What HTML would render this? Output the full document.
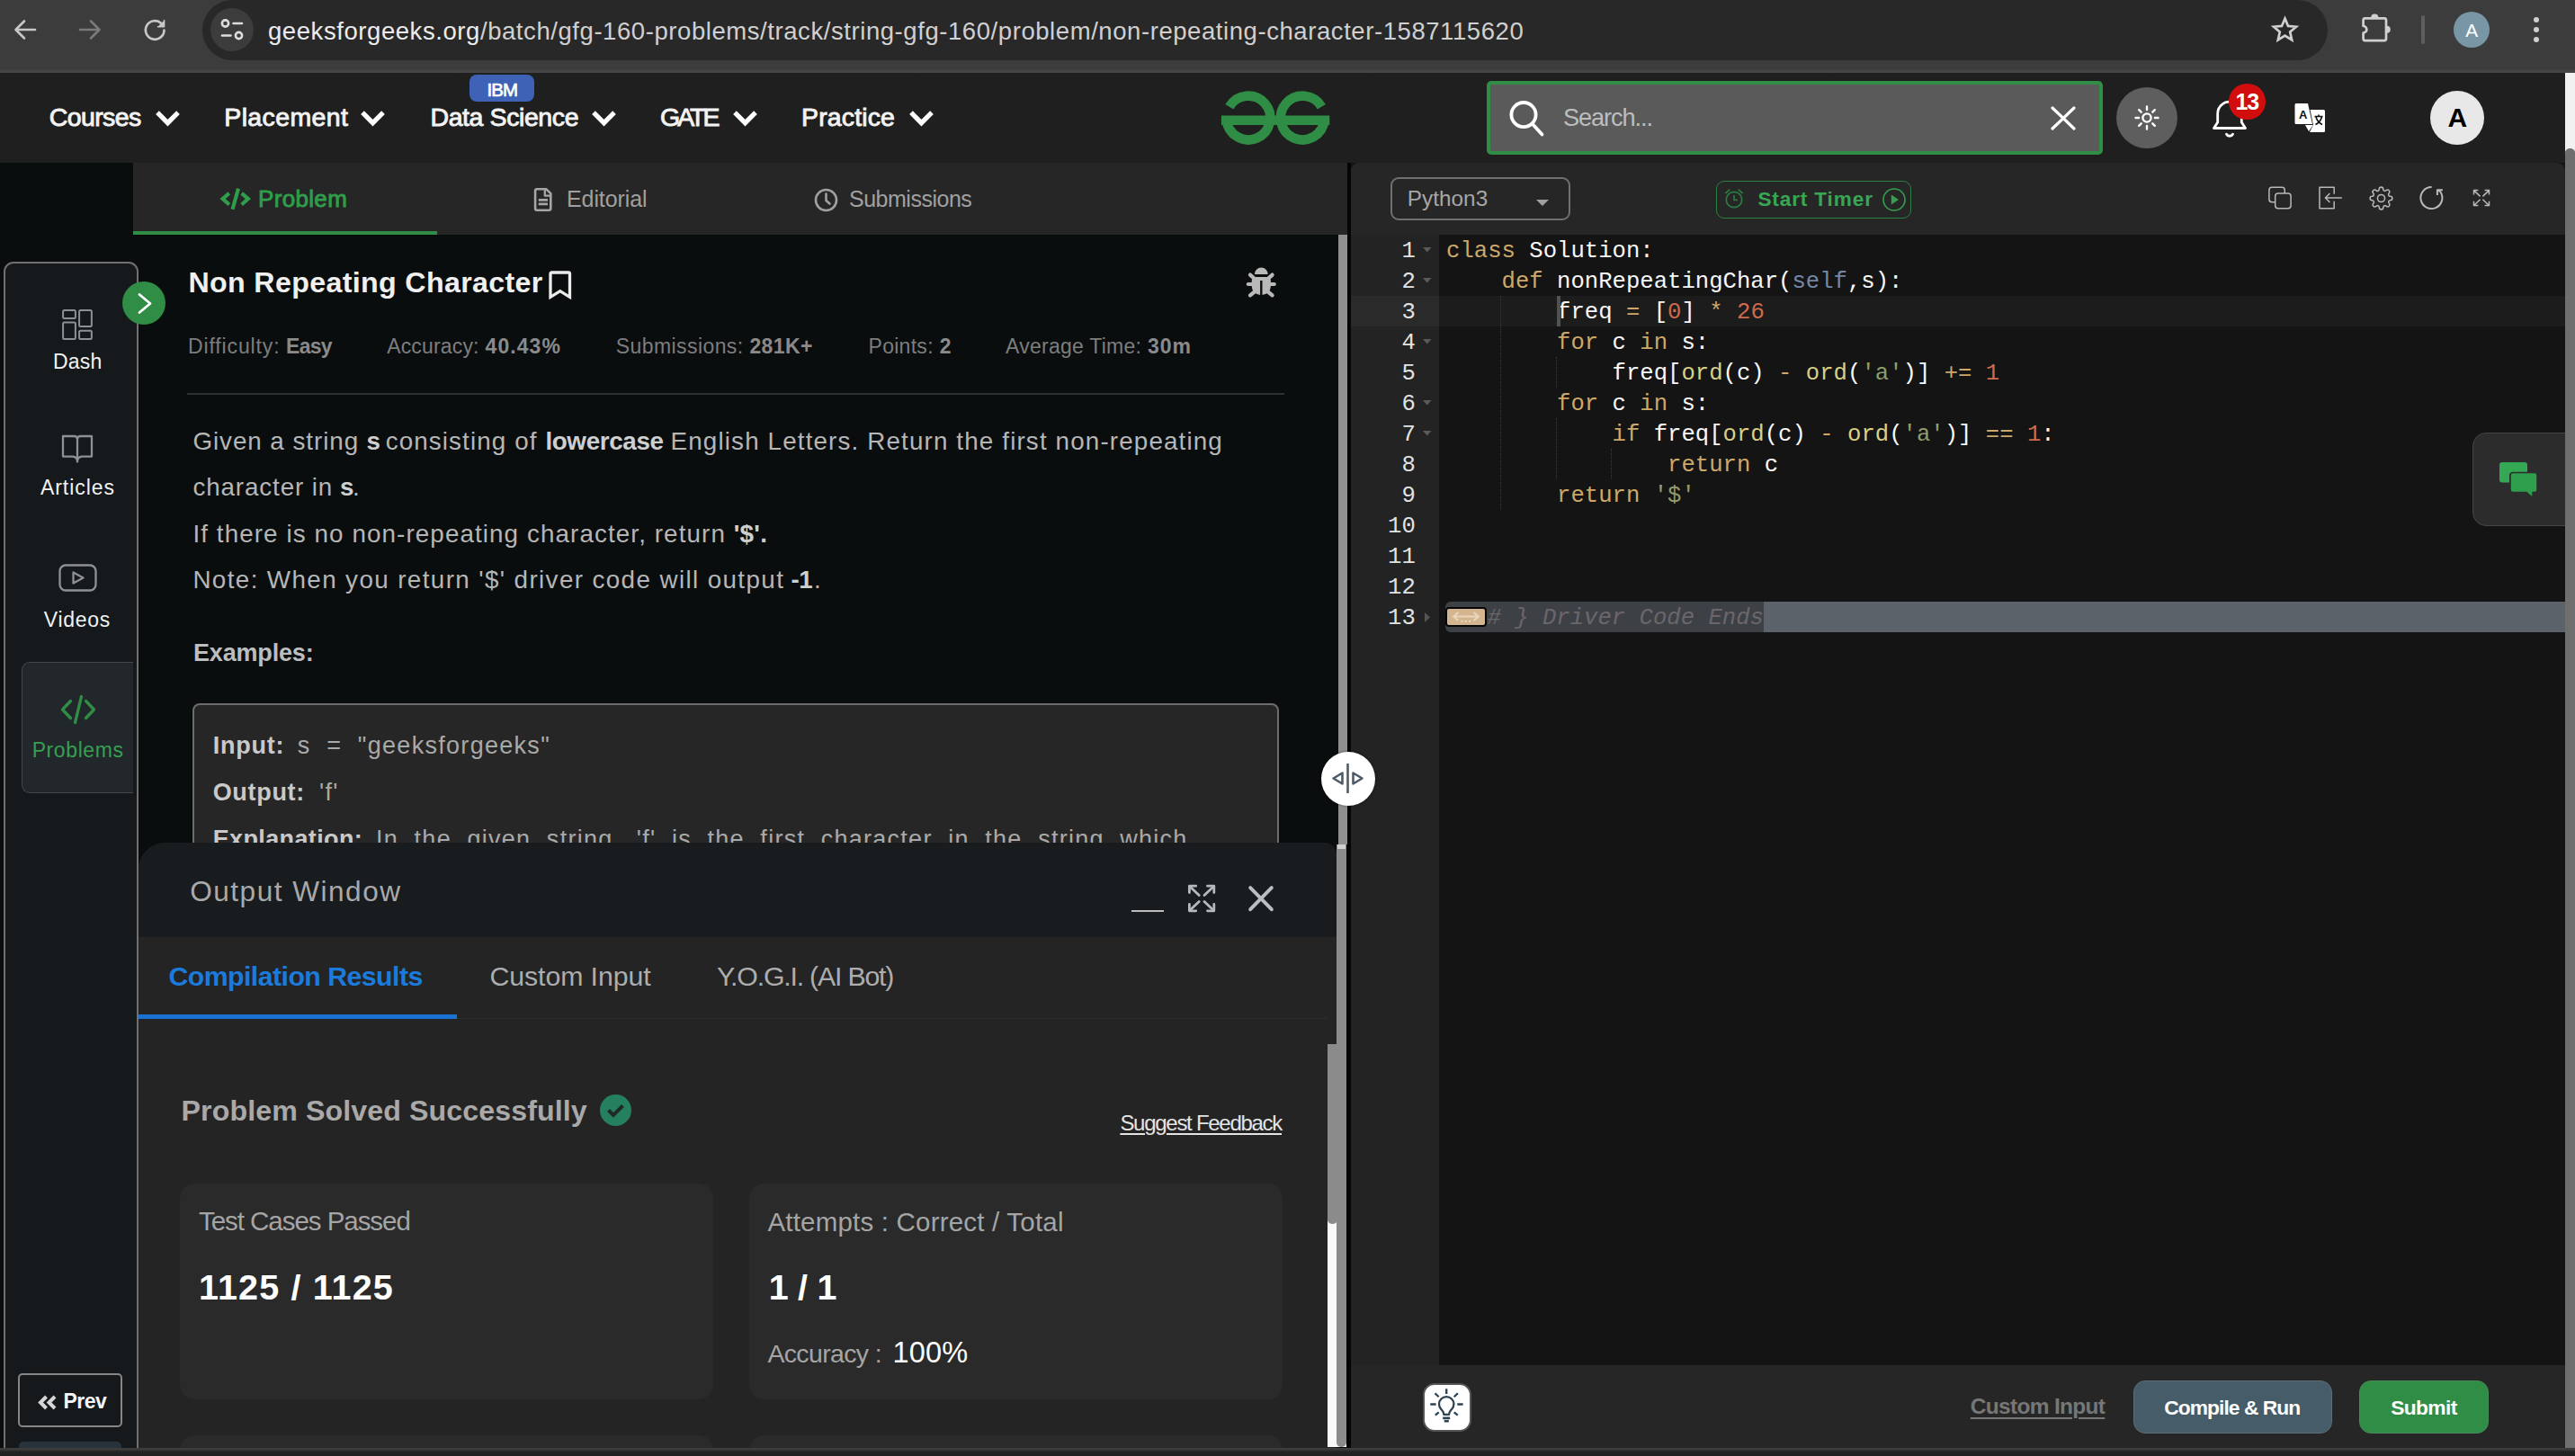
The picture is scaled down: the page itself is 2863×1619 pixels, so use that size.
<!DOCTYPE html>
<html><head><meta charset="utf-8"><title>Non Repeating Character</title>
<style>
html,body{margin:0;padding:0;background:#141414;}
body{width:2863px;height:1619px;position:relative;overflow:hidden;font-family:'Liberation Sans', sans-serif;}
body div{position:absolute;box-sizing:border-box;}
body svg{position:absolute;overflow:visible;}
.t{white-space:pre;}

</style></head><body>
<div style="left:0px;top:0px;width:2863px;height:81px;background:#3c3c3c;"></div>
<div style="left:0px;top:77px;width:2863px;height:4px;background:linear-gradient(#3f3f3f,#484848);"></div>
<div style="left:225px;top:-0.5px;width:2363px;height:67.5px;background:#282828;border-radius:34px;"></div>
<svg style="left:14px;top:19px" width="28" height="28" viewBox="0 0 28 28" fill="none" stroke="#c7c7c7" stroke-width="2.6" stroke-linecap="round" stroke-linejoin="round"><path d="M25 14H4M13 4.5L3.5 14l9.5 9.5"/></svg>
<svg style="left:86px;top:19px" width="28" height="28" viewBox="0 0 28 28" fill="none" stroke="#7a7a7a" stroke-width="2.6" stroke-linecap="round" stroke-linejoin="round"><path d="M3 14h21M15 4.5l9.5 9.5-9.5 9.5"/></svg>
<svg style="left:159px;top:20px" width="27" height="27" viewBox="0 0 27 27" fill="none" stroke="#c7c7c7" stroke-width="2.7" stroke-linecap="round" stroke-linejoin="round"><path d="M23.5 13.5a10.3 10.3 0 1 1-3.2-7.5"/><path d="M23.6 2.6v7.2h-7.2" fill="#c7c7c7" stroke-width="1.5"/></svg>
<div style="left:234px;top:9px;width:48px;height:48px;background:#3c3c3c;border-radius:50%;"></div>
<svg style="left:244px;top:20px" width="28" height="26" viewBox="0 0 28 26" fill="none" stroke="#dcdcdc" stroke-width="2.6" stroke-linecap="round"><circle cx="6.5" cy="6" r="3.6"/><path d="M15.5 6h9.5"/><circle cx="21.5" cy="19.5" r="3.6"/><path d="M3 19.5h9.5"/></svg>
<div class="t" style="left:298px;top:16.67px;font:400 27.5px/36px 'Liberation Sans', sans-serif;color:#d0d0d0;white-space:pre;letter-spacing:0.569px;"><span style="color:#ececec">geeksforgeeks.org</span>/batch/gfg-160-problems/track/string-gfg-160/problem/non-repeating-character-1587115620</div>
<svg style="left:2523.500px;top:16px" width="33" height="32" viewBox="0 0 33 32" fill="none" stroke="#cfcfcf" stroke-width="2.700" stroke-linejoin="miter"><path d="M16.500 4.600l3.500 8.300 9 .800-6.800 5.900 2 8.800-7.700-4.700-7.700 4.700 2-8.800L4 13.700l9-.800z"/></svg>
<svg style="left:2620px;top:10px" width="44" height="44" viewBox="2620 10 44 44" fill="none" stroke="#d0d0d0" stroke-width="2.700" stroke-linejoin="round"><path d="M2629.600 20.400H2651q2 0 2 2V43.100q0 2-2 2H2629.600q-2 0-2-2V36.500a3.700 3.700 0 0 0 0-7.500V22.400q0-2 2-2z"/><path d="M2636.200 19.600a4.100 4.100 0 0 1 8.200 0zM2653.800 28.700a4 4 0 0 1 0 8z" fill="#d0d0d0" stroke="none"/></svg>
<div style="left:2692.2px;top:17px;width:3.6px;height:31.6px;background:#5e5e5e;border-radius:2px;"></div>
<div style="left:2727.9px;top:12.5px;width:40.4px;height:40.4px;background:#7996a6;border-radius:50%;"></div>
<div class="t" style="left:2741.3px;top:20.19px;font:400 20.8px/27px 'Liberation Sans', sans-serif;color:#ffffff;white-space:pre;letter-spacing:-0.275px;">A</div>
<div style="left:2816.9px;top:18.7px;width:6.2px;height:6.2px;background:#d0d0d0;border-radius:50%;"></div>
<div style="left:2816.9px;top:29.699999999999996px;width:6.2px;height:6.2px;background:#d0d0d0;border-radius:50%;"></div>
<div style="left:2816.9px;top:40.9px;width:6.2px;height:6.2px;background:#d0d0d0;border-radius:50%;"></div>
<div style="left:0px;top:81px;width:2852px;height:100px;background:#1f1f1f;"></div>
<div class="t" style="left:54.7px;top:112.02px;font:400 28.5px/37px 'Liberation Sans', sans-serif;color:#f3f3f3;white-space:pre;letter-spacing:-0.588px;-webkit-text-stroke:0.9px #f3f3f3;">Courses</div>
<svg style="left:172.8px;top:123px" width="27" height="18" viewBox="0 0 27 18" fill="none" stroke="#fff" stroke-width="5.2"><path d="M2 2.2l11.5 11.5L25 2.2"/></svg>
<div class="t" style="left:249.3px;top:112.02px;font:400 28.5px/37px 'Liberation Sans', sans-serif;color:#f3f3f3;white-space:pre;letter-spacing:0.358px;-webkit-text-stroke:0.9px #f3f3f3;">Placement</div>
<svg style="left:401.4px;top:123px" width="27" height="18" viewBox="0 0 27 18" fill="none" stroke="#fff" stroke-width="5.2"><path d="M2 2.2l11.5 11.5L25 2.2"/></svg>
<div class="t" style="left:478.5px;top:112.02px;font:400 28.5px/37px 'Liberation Sans', sans-serif;color:#f3f3f3;white-space:pre;letter-spacing:-0.410px;-webkit-text-stroke:0.9px #f3f3f3;">Data Science</div>
<svg style="left:657.5px;top:123px" width="27" height="18" viewBox="0 0 27 18" fill="none" stroke="#fff" stroke-width="5.2"><path d="M2 2.2l11.5 11.5L25 2.2"/></svg>
<div class="t" style="left:734px;top:112.02px;font:400 28.5px/37px 'Liberation Sans', sans-serif;color:#f3f3f3;white-space:pre;letter-spacing:-2.996px;-webkit-text-stroke:0.9px #f3f3f3;">GATE</div>
<svg style="left:814.6px;top:123px" width="27" height="18" viewBox="0 0 27 18" fill="none" stroke="#fff" stroke-width="5.2"><path d="M2 2.2l11.5 11.5L25 2.2"/></svg>
<div class="t" style="left:891px;top:112.02px;font:400 28.5px/37px 'Liberation Sans', sans-serif;color:#f3f3f3;white-space:pre;letter-spacing:0.140px;-webkit-text-stroke:0.9px #f3f3f3;">Practice</div>
<svg style="left:1010.5px;top:123px" width="27" height="18" viewBox="0 0 27 18" fill="none" stroke="#fff" stroke-width="5.2"><path d="M2 2.2l11.5 11.5L25 2.2"/></svg>
<div style="left:522px;top:83px;width:72px;height:30px;background:#3d62b6;border-radius:8px;"></div>
<div class="t" style="left:541.5px;top:85.60px;font:400 20.5px/27px 'Liberation Sans', sans-serif;color:#fff;white-space:pre;letter-spacing:-0.981px;-webkit-text-stroke:0.7px #fff;">IBM</div>
<svg style="left:0;top:0" width="2863" height="200" viewBox="0 0 2863 200" fill="none" stroke="#2f8d46" stroke-width="10.6"><path d="M1366.9 118.7A24.4 24.4 0 1 1 1363.7 133.7"/><path d="M1469.3 118.7A24.4 24.4 0 1 0 1472.5 133.7"/><path d="M1357.9 133.7H1478.3" stroke-width="10.4"/></svg>
<div style="left:1653px;top:90px;width:685px;height:82px;background:#5a5a5a;border:4px solid #2f8d46;border-radius:5px;"></div>
<svg style="left:1675px;top:110px" width="46" height="46" viewBox="0 0 46 46" fill="none" stroke="#fff" stroke-width="3.8" stroke-linecap="round"><circle cx="19" cy="17.6" r="13.6"/><path d="M29 28l10.5 11.5"/></svg>
<div class="t" style="left:1738px;top:113.48px;font:400 27.2px/35px 'Liberation Sans', sans-serif;color:#bdbdbd;white-space:pre;letter-spacing:-1.107px;">Search...</div>
<svg style="left:2280px;top:118px" width="28" height="27" viewBox="0 0 28 27" fill="none" stroke="#fff" stroke-width="3.2" stroke-linecap="round"><path d="M2 2l24 23M26 2L2 25"/></svg>
<div style="left:2353px;top:97px;width:68px;height:68px;background:#5e5e5e;border-radius:50%;"></div>
<svg style="left:2373px;top:117px" width="28" height="28" viewBox="0 0 28 28" fill="none" stroke="#fff" stroke-width="2.4" stroke-linecap="round"><circle cx="14" cy="14" r="4.6"/><path d="M14 1.5v3.6M14 22.9v3.6M1.5 14h3.6M22.9 14h3.6M5.2 5.2l2.5 2.5M20.3 20.3l2.5 2.5M22.8 5.2l-2.5 2.5M7.7 20.3l-2.5 2.5"/></svg>
<svg style="left:2458px;top:108px" width="44" height="46" viewBox="0 0 44 46" fill="none" stroke="#fff" stroke-width="2.8" stroke-linecap="round" stroke-linejoin="round"><path d="M3.5 34.5h35l-4.2-6.5V18.5a13.3 13.3 0 0 0-26.6 0V28z"/><path d="M17.5 41.2a4 4 0 0 0 7 0"/></svg>
<div style="left:2477.8px;top:92.6px;width:40.8px;height:40.8px;background:#d10d0d;border-radius:50%;"></div>
<div class="t" style="left:2485.5px;top:97.34px;font:700 25px/32px 'Liberation Sans', sans-serif;color:#fff;white-space:pre;letter-spacing:-1.208px;">13</div>
<svg style="left:2551px;top:114px" width="35" height="35" viewBox="0 0 35 35"><path d="M2 1h13l5 23H2a1.5 1.5 0 0 1-1.500-1.500V2.500A1.500 1.500 0 0 1 2 1z" fill="#fff"/><path d="M17.500 8H32.500A1.500 1.500 0 0 1 34 9.500V31.500a1.500 1.500 0 0 1-1.500 1.500H17l4-8z" fill="#fff"/><path d="M12 25l9 0-5 7z" fill="#fff"/><text x="5" y="18" font-family="Liberation Sans" font-size="13" font-weight="700" fill="#111">A</text><path d="M22.500 15.500h9M27 13.500v2M24 16c1 4 4 7 7 8.500M30.500 16c-1 4-4 7-7 8.500" stroke="#111" stroke-width="1.600" fill="none"/></svg>
<div style="left:2702px;top:101px;width:60px;height:60px;background:#e8e8e8;border-radius:50%;"></div>
<div class="t" style="left:2721.5px;top:110.60px;font:700 30px/39px 'Liberation Sans', sans-serif;color:#000;white-space:pre;letter-spacing:-0.672px;">A</div>
<div style="left:2852px;top:81px;width:11px;height:1539px;background:#f1f1f1;"></div>
<div style="left:2852px;top:165px;width:11px;height:1460px;background:#6f6f6f;border-radius:6px 6px 0 0;"></div>
<div style="left:0px;top:181px;width:1498px;height:1430px;background:#0a0d0e;"></div>
<div style="left:148px;top:181px;width:1350px;height:80px;background:#262626;"></div>
<div style="left:148px;top:256.5px;width:338px;height:4.5px;background:#2f8d46;"></div>
<svg style="left:240px;top:204px" width="44" height="34" viewBox="240 204 44 34" fill="none" stroke="#2f9e4b" stroke-width="4.1" stroke-linejoin="miter"><path d="M254.8 214.9L247.6 221.1 254.8 227.500M268.7 214.9L275.9 221.1 268.7 227.500M265 209.6L258.5 232.8"/></svg>
<div class="t" style="left:287px;top:203.99px;font:400 26px/34px 'Liberation Sans', sans-serif;color:#2f9e4b;white-space:pre;letter-spacing:0.334px;-webkit-text-stroke:0.85px #2f9e4b;">Problem</div>
<svg style="left:590px;top:205px" width="28" height="34" viewBox="590 205 28 34" fill="none" stroke="#a6a6a6" stroke-width="2.600" stroke-linejoin="round"><path d="M597.1 210.3h10.3l4.900 4.900v16.500q0 2-2 2h-13.200q-2 0-2-2v-19.400q0-2 2-2z"/><path d="M605.800 211.200v6.500h5.800" stroke-width="2.300"/><path d="M598.800 222.400h10.200M598.800 226.900h10.200"/></svg>
<div class="t" style="left:630px;top:205.34px;font:400 25px/32px 'Liberation Sans', sans-serif;color:#a0a0a0;white-space:pre;letter-spacing:-0.086px;">Editorial</div>
<svg style="left:905px;top:209px" width="27" height="27" viewBox="0 0 27 27" fill="none" stroke="#a0a0a0" stroke-width="2.6" stroke-linecap="round" stroke-linejoin="round"><circle cx="13.500" cy="13.500" r="11.500"/><path d="M13.500 6.500v7.500l4 3.500"/></svg>
<div class="t" style="left:944px;top:205.34px;font:400 25px/32px 'Liberation Sans', sans-serif;color:#a0a0a0;white-space:pre;letter-spacing:-0.489px;">Submissions</div>
<div class="t" style="left:209.5px;top:292.54px;font:700 32.2px/42px 'Liberation Sans', sans-serif;color:#f0f0f0;white-space:pre;letter-spacing:0.340px;">Non Repeating Character</div>
<svg style="left:609px;top:300px" width="28" height="34" viewBox="0 0 28 34" fill="none" stroke="#ebebeb" stroke-width="3.300" stroke-linejoin="miter"><path d="M3 30.300V4.500q0-1.500 1.500-1.500h18.500q1.500 0 1.500 1.500v25.800L13.750 23.600z"/></svg>
<svg style="left:1380px;top:294px" width="44" height="40" viewBox="1380 294 44 40" fill="#b9b9b9"><path d="M1394.850 305a7.450 7.450 0 0 1 14.900 0z"/><path d="M1396.200 307.900h12.200q4.500 0 4.500 4.500v5.800a10.600 10.100 0 0 1-21.200 0v-5.800q0-4.500 4.500-4.500z"/><rect x="1401.100" y="312" width="2.400" height="17" fill="#0a0d0e"/><path d="M1390 305.600L1396 311M1414.600 305.600L1408.600 311M1387.800 316H1393M1416.800 316H1411.600M1390 328.400L1396 323.500M1414.600 328.400L1408.600 323.500" fill="none" stroke="#b9b9b9" stroke-width="4.200" stroke-linecap="round"/></svg>
<div class="t" style="left:209px;top:369.53px;font:400 23px/30px 'Liberation Sans', sans-serif;color:#7d7d7d;white-space:pre;letter-spacing:0.868px;">Difficulty:</div>
<div class="t" style="left:318px;top:369.53px;font:700 23px/30px 'Liberation Sans', sans-serif;color:#8a8a8a;white-space:pre;letter-spacing:-0.691px;">Easy</div>
<div class="t" style="left:430.2px;top:369.53px;font:400 23px/30px 'Liberation Sans', sans-serif;color:#7d7d7d;white-space:pre;letter-spacing:0.167px;">Accuracy:</div>
<div class="t" style="left:539.6px;top:369.53px;font:700 23px/30px 'Liberation Sans', sans-serif;color:#8a8a8a;white-space:pre;letter-spacing:1.052px;">40.43%</div>
<div class="t" style="left:684.7px;top:369.53px;font:400 23px/30px 'Liberation Sans', sans-serif;color:#7d7d7d;white-space:pre;letter-spacing:0.428px;">Submissions:</div>
<div class="t" style="left:833.4px;top:369.53px;font:700 23px/30px 'Liberation Sans', sans-serif;color:#8a8a8a;white-space:pre;letter-spacing:0.395px;">281K+</div>
<div class="t" style="left:965.5px;top:369.53px;font:400 23px/30px 'Liberation Sans', sans-serif;color:#7d7d7d;white-space:pre;letter-spacing:0.288px;">Points:</div>
<div class="t" style="left:1044.7px;top:369.53px;font:700 23px/30px 'Liberation Sans', sans-serif;color:#8a8a8a;white-space:pre;letter-spacing:-0.497px;">2</div>
<div class="t" style="left:1118px;top:369.53px;font:400 23px/30px 'Liberation Sans', sans-serif;color:#7d7d7d;white-space:pre;letter-spacing:0.250px;">Average Time:</div>
<div class="t" style="left:1276px;top:369.53px;font:700 23px/30px 'Liberation Sans', sans-serif;color:#8a8a8a;white-space:pre;letter-spacing:0.901px;">30m</div>
<div style="left:208px;top:437px;width:1220px;height:2px;background:#2e3133;"></div>
<div class="t" style="left:214.4px;top:473.37px;font:400 27.8px/36px 'Liberation Sans', sans-serif;color:#b6b6b6;white-space:pre;letter-spacing:0.941px;">Given a string</div>
<div class="t" style="left:407.6px;top:473.37px;font:700 27.8px/36px 'Liberation Sans', sans-serif;color:#cfcfcf;white-space:pre;letter-spacing:-2.069px;">s</div>
<div class="t" style="left:428.7px;top:473.37px;font:400 27.8px/36px 'Liberation Sans', sans-serif;color:#b6b6b6;white-space:pre;letter-spacing:1.103px;">consisting of</div>
<div class="t" style="left:606.4px;top:473.37px;font:700 27.8px/36px 'Liberation Sans', sans-serif;color:#cfcfcf;white-space:pre;letter-spacing:-0.359px;">lowercase</div>
<div class="t" style="left:745.6px;top:473.37px;font:400 27.8px/36px 'Liberation Sans', sans-serif;color:#b6b6b6;white-space:pre;letter-spacing:1.138px;">English Letters. Return the first non-repeating</div>
<div class="t" style="left:214.4px;top:524.37px;font:400 27.8px/36px 'Liberation Sans', sans-serif;color:#b6b6b6;white-space:pre;letter-spacing:0.875px;">character in</div>
<div class="t" style="left:378px;top:524.37px;font:700 27.8px/36px 'Liberation Sans', sans-serif;color:#cfcfcf;white-space:pre;letter-spacing:-2.669px;">s</div>
<div class="t" style="left:392px;top:524.37px;font:400 27.8px/36px 'Liberation Sans', sans-serif;color:#b6b6b6;white-space:pre;letter-spacing:-2.734px;">.</div>
<div class="t" style="left:214.4px;top:575.87px;font:400 27.8px/36px 'Liberation Sans', sans-serif;color:#b6b6b6;white-space:pre;letter-spacing:1.091px;">If there is no non-repeating character, return</div>
<div class="t" style="left:815.7px;top:575.87px;font:700 27.8px/36px 'Liberation Sans', sans-serif;color:#cfcfcf;white-space:pre;letter-spacing:0.255px;">&#x27;$&#x27;.</div>
<div class="t" style="left:214.4px;top:626.87px;font:400 27.8px/36px 'Liberation Sans', sans-serif;color:#b6b6b6;white-space:pre;letter-spacing:1.385px;">Note: When you return &#x27;$&#x27; driver code will output</div>
<div class="t" style="left:879.4px;top:626.87px;font:700 27.8px/36px 'Liberation Sans', sans-serif;color:#cfcfcf;white-space:pre;letter-spacing:-0.346px;">-1</div>
<div class="t" style="left:905px;top:626.87px;font:400 27.8px/36px 'Liberation Sans', sans-serif;color:#b6b6b6;white-space:pre;letter-spacing:-2.834px;">.</div>
<div class="t" style="left:215px;top:708.54px;font:700 27px/35px 'Liberation Sans', sans-serif;color:#bdbdbd;white-space:pre;letter-spacing:-0.174px;">Examples:</div>
<div style="left:213.6px;top:781.6px;width:1208.6px;height:200px;background:#262626;border:2px solid #6c6c6c;border-radius:8px;"></div>
<div class="t" style="left:236.7px;top:812.04px;font:700 27px/35px 'Liberation Sans', sans-serif;color:#c9c9c9;white-space:pre;letter-spacing:0.788px;">Input:</div>
<div class="t" style="left:330.8px;top:812.04px;font:400 27px/35px 'Liberation Sans', sans-serif;color:#a9a9a9;white-space:pre;letter-spacing:1.295px;">s  =  &quot;geeksforgeeks&quot;</div>
<div class="t" style="left:236.7px;top:863.94px;font:700 27px/35px 'Liberation Sans', sans-serif;color:#c9c9c9;white-space:pre;letter-spacing:0.684px;">Output:</div>
<div class="t" style="left:355px;top:863.94px;font:400 27px/35px 'Liberation Sans', sans-serif;color:#a9a9a9;white-space:pre;letter-spacing:1.275px;">&#x27;f&#x27;</div>
<div class="t" style="left:236.7px;top:915.84px;font:700 27px/35px 'Liberation Sans', sans-serif;color:#c9c9c9;white-space:pre;letter-spacing:0.373px;">Explanation:</div>
<div class="t" style="left:418px;top:915.84px;font:400 27px/35px 'Liberation Sans', sans-serif;color:#a9a9a9;white-space:pre;letter-spacing:1.266px;">In  the  given  string,  &#x27;f&#x27;  is  the  first  character  in  the  string  which</div>
<div style="left:1488px;top:261px;width:10px;height:680px;background:#8f8f8f;"></div>
<div style="left:1498px;top:181px;width:4px;height:1430px;background:#050505;"></div>
<div style="left:3.6px;top:291px;width:150.4px;height:1330px;background:#15191c;border:2px solid #707070;border-radius:11px 11px 0 0;"></div>
<svg style="left:66px;top:340px" width="40" height="42" viewBox="66 340 40 42" fill="none" stroke="#8e9097" stroke-width="2"><rect x="70.100" y="345" width="13.800" height="8.900" rx="1.500"/><rect x="88.100" y="345" width="13.800" height="18" rx="1.500"/><rect x="70.100" y="358.600" width="13.800" height="18.400" rx="1.500"/><rect x="88.100" y="367.800" width="13.800" height="9.200" rx="1.500"/></svg>
<div class="t" style="left:59px;top:387.03px;font:400 23px/30px 'Liberation Sans', sans-serif;color:#f2f2f2;white-space:pre;letter-spacing:0.199px;">Dash</div>
<svg style="left:66px;top:480px" width="40" height="38" viewBox="66 480 40 38" fill="none" stroke="#8e9097" stroke-width="2.300" stroke-linejoin="round"><path d="M70 485H82.500Q86 485 86 488.500Q86 485 89.500 485H102V507.600H91.500Q86 508 86 513.500Q86 508 80.500 507.600H70ZM86 488.500V513"/></svg>
<div class="t" style="left:45px;top:526.83px;font:400 23px/30px 'Liberation Sans', sans-serif;color:#f2f2f2;white-space:pre;letter-spacing:0.933px;">Articles</div>
<svg style="left:65px;top:627px" width="43" height="31" viewBox="0 0 43 31" fill="none" stroke="#8e9097" stroke-width="2.300" stroke-linejoin="round"><rect x="1.500" y="1.500" width="40" height="28" rx="6.500"/><path d="M16.500 9.500l11 6-11 6z"/></svg>
<div class="t" style="left:48.8px;top:674.23px;font:400 23px/30px 'Liberation Sans', sans-serif;color:#f2f2f2;white-space:pre;letter-spacing:0.723px;">Videos</div>
<div style="left:24px;top:736px;width:124px;height:146px;background:#22272b;border:1.5px solid #43474a;border-right:none;border-radius:9px 0 0 9px;"></div>
<svg style="left:67px;top:772px" width="40" height="34" viewBox="0 0 40 34" fill="none" stroke="#2f8d46" stroke-width="3.300" stroke-linecap="round" stroke-linejoin="round"><path d="M11.500 7.500L2.500 17l9 9.500M28.500 7.500l9 9.500-9 9.500M23.500 2.500L16.500 31.500"/></svg>
<div class="t" style="left:35.7px;top:818.73px;font:400 23px/30px 'Liberation Sans', sans-serif;color:#35a04f;white-space:pre;letter-spacing:0.593px;">Problems</div>
<div style="left:135.8px;top:313px;width:48px;height:48px;background:#2f8d46;border-radius:50%;"></div>
<svg style="left:152px;top:324.500px" width="18" height="25" viewBox="0 0 18 25" fill="none" stroke="#fff" stroke-width="2.800" stroke-linecap="round" stroke-linejoin="round"><path d="M3 2.500l12 10-12 10"/></svg>
<div style="left:20px;top:1527.3px;width:116px;height:59.5px;border:2px solid #868686;border-radius:5px;"></div>
<svg style="left:41.500px;top:1550.500px" width="21" height="17" viewBox="0 0 21 17" fill="none" stroke="#d6d6d6" stroke-width="4"><path d="M9.500 2L3 8.500l6.500 6.500M19 2L12.500 8.500l6.500 6.500"/></svg>
<div class="t" style="left:70.6px;top:1543.33px;font:700 23px/30px 'Liberation Sans', sans-serif;color:#f5f5f5;white-space:pre;letter-spacing:-0.593px;">Prev</div>
<div style="left:21px;top:1602.7px;width:113.5px;height:20px;background:#28323a;border-radius:5px 5px 0 0;"></div>
<div style="left:153.5px;top:937px;width:1332.5px;height:680px;background:#242424;border-radius:30px 14px 0 0;"></div>
<div style="left:153.5px;top:937px;width:1332.5px;height:105px;background:#181c1f;border-radius:30px 14px 0 0;"></div>
<div class="t" style="left:211.2px;top:971.15px;font:400 31.6px/41px 'Liberation Sans', sans-serif;color:#a9a9a9;white-space:pre;letter-spacing:1.488px;">Output Window</div>
<div style="left:1257.8px;top:1011.8px;width:36.5px;height:2.4px;background:#bbbdbf;"></div>
<svg style="left:1316px;top:980px" width="40" height="40" viewBox="1316 980 40 40" fill="none" stroke="#b6b9bb" stroke-width="2.800" stroke-linecap="round" stroke-linejoin="round"><path d="M1322.400 992.500V985.200H1329.700M1342.500 985.200H1349.800V992.500M1349.800 1005.500V1012.800H1342.500M1329.700 1012.800H1322.400V1005.500"/><path d="M1323.400 986.200L1333.200 995.600M1348.800 986.200L1339 995.600M1348.800 1011.800L1339 1002.400M1323.400 1011.800L1333.200 1002.400"/></svg>
<svg style="left:1382px;top:980px" width="40" height="40" viewBox="1382 980 40 40" fill="none" stroke="#bbbec0" stroke-width="4" stroke-linecap="round"><path d="M1390.200 987.200L1413.800 1011.200M1413.800 987.200L1390.200 1011.200"/></svg>
<div class="t" style="left:187.4px;top:1066.40px;font:700 30.3px/39px 'Liberation Sans', sans-serif;color:#1b7bdc;white-space:pre;letter-spacing:-0.557px;">Compilation Results</div>
<div style="left:155px;top:1132.3px;width:1321px;height:1.2px;background:#2c2c2c;"></div>
<div style="left:153.5px;top:1127.7px;width:354px;height:5.6px;background:#1a73d4;"></div>
<div class="t" style="left:544.5px;top:1066.40px;font:400 30.3px/39px 'Liberation Sans', sans-serif;color:#adadad;white-space:pre;letter-spacing:-0.103px;">Custom Input</div>
<div class="t" style="left:797px;top:1066.40px;font:400 30.3px/39px 'Liberation Sans', sans-serif;color:#adadad;white-space:pre;letter-spacing:-1.202px;">Y.O.G.I. (AI Bot)</div>
<div class="t" style="left:201.5px;top:1214.14px;font:700 32.2px/42px 'Liberation Sans', sans-serif;color:#a9a9a9;white-space:pre;letter-spacing:0.082px;">Problem Solved Successfully</div>
<svg style="left:666.9px;top:1216.500px" width="35" height="35" viewBox="0 0 35 35"><circle cx="17.500" cy="17.500" r="17.500" fill="#24805f"/><path d="M9.500 17.500l5.500 5.500 10.500-10.500" fill="none" stroke="#1f2a26" stroke-width="4" /></svg>
<div class="t" style="left:1245.4px;top:1233.18px;font:400 24px/31px 'Liberation Sans', sans-serif;color:#e4e4e4;white-space:pre;letter-spacing:-1.280px;text-decoration:underline;text-decoration-thickness:1.500px;text-underline-offset:3px;">Suggest Feedback</div>
<div style="left:199.7px;top:1316px;width:593.5px;height:239.5px;background:#2a2a2a;border-radius:16px;"></div>
<div style="left:832.5px;top:1316px;width:593.5px;height:239.5px;background:#2a2a2a;border-radius:16px;"></div>
<div style="left:199.7px;top:1596px;width:593.5px;height:40px;background:#2a2a2a;border-radius:16px;"></div>
<div style="left:832.5px;top:1596px;width:593.5px;height:40px;background:#2a2a2a;border-radius:16px;"></div>
<div class="t" style="left:221px;top:1338.78px;font:400 29.5px/38px 'Liberation Sans', sans-serif;color:#a5a5a5;white-space:pre;letter-spacing:-1.043px;">Test Cases Passed</div>
<div class="t" style="left:221px;top:1405.81px;font:700 39.5px/51px 'Liberation Sans', sans-serif;color:#ffffff;white-space:pre;letter-spacing:1.151px;">1125 / 1125</div>
<div class="t" style="left:853.4px;top:1339.78px;font:400 29.5px/38px 'Liberation Sans', sans-serif;color:#a5a5a5;white-space:pre;letter-spacing:0.201px;">Attempts : Correct / Total</div>
<div class="t" style="left:854.7px;top:1405.51px;font:700 39.5px/51px 'Liberation Sans', sans-serif;color:#ffffff;white-space:pre;letter-spacing:-0.258px;">1 / 1</div>
<div class="t" style="left:853.4px;top:1486.62px;font:400 28.5px/37px 'Liberation Sans', sans-serif;color:#a5a5a5;white-space:pre;letter-spacing:-0.647px;">Accuracy :</div>
<div class="t" style="left:992.6px;top:1482.74px;font:400 32.5px/42px 'Liberation Sans', sans-serif;color:#ffffff;white-space:pre;letter-spacing:0.164px;">100%</div>
<div style="left:1476px;top:1161px;width:20.5px;height:448px;background:#fafafa;"></div>
<div style="left:1476px;top:1161px;width:10.5px;height:200px;background:#8b8b8b;border-radius:0 0 5px 5px;"></div>
<div style="left:1486px;top:939px;width:10.5px;height:669.5px;background:#8b8b8b;border-radius:0 0 5px 5px;"></div>
<div style="left:1486.5px;top:939px;width:9px;height:5px;background:#cfcfcf;"></div>
<div style="left:1497px;top:939px;width:5px;height:672px;background:#050505;"></div>
<div style="left:1502px;top:181px;width:1350px;height:1430px;background:#262626;border-radius:9px 9px 0 0;"></div>
<div style="left:1546px;top:197.3px;width:199.7px;height:47.4px;border:2px solid #707070;border-radius:9px;"></div>
<div class="t" style="left:1564.7px;top:204.58px;font:400 24.3px/32px 'Liberation Sans', sans-serif;color:#a6a6a6;white-space:pre;letter-spacing:0.053px;">Python3</div>
<svg style="left:1707.600px;top:221.700px" width="14" height="7" viewBox="0 0 14 7"><path d="M0 0h14L7 7z" fill="#a0a0a0"/></svg>
<div style="left:1907.8px;top:201px;width:217.2px;height:42.2px;border:1.300px solid #2e7f44;border-radius:9px;"></div>
<svg style="left:1916px;top:208px" width="24" height="26" viewBox="0 0 24 26" fill="none" stroke="#2b7c42" stroke-width="1.700" stroke-linecap="round"><circle cx="12" cy="14" r="8.700"/><path d="M12 9.500v4.800h3.200M3 6.500l3.800-3.300M21 6.500l-3.800-3.300"/></svg>
<div class="t" style="left:1954.4px;top:207.37px;font:700 22.6px/29px 'Liberation Sans', sans-serif;color:#38a653;white-space:pre;letter-spacing:0.869px;">Start Timer</div>
<svg style="left:2093px;top:209px" width="26" height="26" viewBox="0 0 26 26" fill="none" stroke="#34a050" stroke-width="1.600"><circle cx="13" cy="13" r="12"/><path d="M9.800 7.500l8.200 5.500-8.200 5.500z" fill="#34a050" stroke="none"/></svg>
<svg style="left:2515px;top:200px" width="265" height="40" viewBox="2515 200 265 40" fill="none" stroke="#b8b8b8" stroke-width="1.500" stroke-linejoin="round"><rect x="2522.900" y="208.200" width="17.400" height="16.600" rx="3.200"/><rect x="2529.700" y="215.100" width="17.400" height="16.700" rx="3.200" fill="#262626"/><path d="M2595.200 215.700V208.200H2579V231.800H2595.200V223.800M2603.800 220H2585.600M2590.400 215L2585.400 220 2590.400 225"/><path d="M2703.600 208A12 12 0 1 0 2713.300 213.200L2710.500 211.500" stroke-width="2"/><path d="M2715.900 211.300H2709.900V216.900" stroke-width="2"/><path d="M2750.500 216.500V211.600H2755.400M2762.600 211.600H2767.500V216.500M2767.500 223.700V228.600H2762.600M2755.400 228.600H2750.500V223.700M2750.800 211.900L2757.600 218.400M2767.200 211.900L2760.400 218.400M2767.200 228.300L2760.400 221.800M2750.800 228.300L2757.600 221.800"/></svg>
<svg style="left:2633.500px;top:206.500px" width="27" height="27" viewBox="0 0 24 24" fill="none" stroke="#b8b8b8" stroke-width="1.350" stroke-linejoin="round"><circle cx="12" cy="12" r="3.600"/><path d="M19.400 15a1.650 1.650 0 0 0 .330 1.820l.060.060a2 2 0 1 1-2.830 2.830l-.060-.060a1.650 1.650 0 0 0-1.820-.330 1.650 1.650 0 0 0-1 1.510V21a2 2 0 0 1-4 0v-.090A1.650 1.650 0 0 0 9 19.400a1.650 1.650 0 0 0-1.820.330l-.060.060a2 2 0 1 1-2.830-2.830l.060-.060a1.650 1.650 0 0 0 .330-1.820 1.650 1.650 0 0 0-1.510-1H3a2 2 0 0 1 0-4h.090A1.650 1.650 0 0 0 4.600 9a1.650 1.650 0 0 0-.330-1.820l-.060-.060a2 2 0 1 1 2.830-2.830l.060.060a1.650 1.650 0 0 0 1.820.330H9a1.650 1.650 0 0 0 1-1.510V3a2 2 0 0 1 4 0v.090a1.650 1.650 0 0 0 1 1.510 1.650 1.650 0 0 0 1.820-.330l.060-.060a2 2 0 1 1 2.830 2.830l-.060.060a1.650 1.650 0 0 0-.330 1.820V9a1.650 1.650 0 0 0 1.510 1H21a2 2 0 0 1 0 4h-.090a1.650 1.650 0 0 0-1.510 1z"/></svg>
<div style="left:1502px;top:261px;width:98px;height:1256.5px;background:#232323;"></div>
<div style="left:1600px;top:261px;width:1252px;height:1256.5px;background:#141414;"></div>
<div style="left:1502px;top:329.2px;width:98px;height:34px;background:#2a2a2a;"></div>
<div style="left:1600px;top:329.2px;width:1252px;height:34px;background:#1c1c1c;"></div>
<div style="left:1606.5px;top:668.9000000000001px;width:354px;height:34px;background:#3d4145;border-radius:6px 0 0 6px;"></div>
<div style="left:1960.5px;top:668.9000000000001px;width:891.5px;height:34px;background:#5b6269;"></div>
<div class="t" style="left:1608px;top:263.18px;font:400 25.645px/33px 'Liberation Mono', monospace;color:#F8F8F8;white-space:pre;letter-spacing:0.000px;"><span style="color:#CDA869">class</span><span style="color:#F8F8F8"> Solution:</span></div>
<div class="t" style="left:1608px;top:297.18px;font:400 25.645px/33px 'Liberation Mono', monospace;color:#F8F8F8;white-space:pre;letter-spacing:0.000px;"><span style="color:#F8F8F8">    </span><span style="color:#CDA869">def</span><span style="color:#F8F8F8"> nonRepeatingChar(</span><span style="color:#7587A6">self</span><span style="color:#F8F8F8">,s):</span></div>
<div class="t" style="left:1608px;top:331.18px;font:400 25.645px/33px 'Liberation Mono', monospace;color:#F8F8F8;white-space:pre;letter-spacing:0.000px;"><span style="color:#F8F8F8">        freq </span><span style="color:#CDA869">=</span><span style="color:#F8F8F8"> [</span><span style="color:#CF6A4C">0</span><span style="color:#F8F8F8">] </span><span style="color:#CDA869">*</span><span style="color:#F8F8F8"> </span><span style="color:#CF6A4C">26</span></div>
<div class="t" style="left:1608px;top:365.18px;font:400 25.645px/33px 'Liberation Mono', monospace;color:#F8F8F8;white-space:pre;letter-spacing:0.000px;"><span style="color:#F8F8F8">        </span><span style="color:#CDA869">for</span><span style="color:#F8F8F8"> c </span><span style="color:#CDA869">in</span><span style="color:#F8F8F8"> s:</span></div>
<div class="t" style="left:1608px;top:399.18px;font:400 25.645px/33px 'Liberation Mono', monospace;color:#F8F8F8;white-space:pre;letter-spacing:0.000px;"><span style="color:#F8F8F8">            freq[</span><span style="color:#DAD085">ord</span><span style="color:#F8F8F8">(c) </span><span style="color:#CDA869">-</span><span style="color:#F8F8F8"> </span><span style="color:#DAD085">ord</span><span style="color:#F8F8F8">(</span><span style="color:#8F9D6A">&#x27;a&#x27;</span><span style="color:#F8F8F8">)] </span><span style="color:#CDA869">+=</span><span style="color:#F8F8F8"> </span><span style="color:#CF6A4C">1</span></div>
<div class="t" style="left:1608px;top:433.18px;font:400 25.645px/33px 'Liberation Mono', monospace;color:#F8F8F8;white-space:pre;letter-spacing:0.000px;"><span style="color:#F8F8F8">        </span><span style="color:#CDA869">for</span><span style="color:#F8F8F8"> c </span><span style="color:#CDA869">in</span><span style="color:#F8F8F8"> s:</span></div>
<div class="t" style="left:1608px;top:467.18px;font:400 25.645px/33px 'Liberation Mono', monospace;color:#F8F8F8;white-space:pre;letter-spacing:0.000px;"><span style="color:#F8F8F8">            </span><span style="color:#CDA869">if</span><span style="color:#F8F8F8"> freq[</span><span style="color:#DAD085">ord</span><span style="color:#F8F8F8">(c) </span><span style="color:#CDA869">-</span><span style="color:#F8F8F8"> </span><span style="color:#DAD085">ord</span><span style="color:#F8F8F8">(</span><span style="color:#8F9D6A">&#x27;a&#x27;</span><span style="color:#F8F8F8">)] </span><span style="color:#CDA869">==</span><span style="color:#F8F8F8"> </span><span style="color:#CF6A4C">1</span><span style="color:#F8F8F8">:</span></div>
<div class="t" style="left:1608px;top:501.18px;font:400 25.645px/33px 'Liberation Mono', monospace;color:#F8F8F8;white-space:pre;letter-spacing:0.000px;"><span style="color:#F8F8F8">                </span><span style="color:#CDA869">return</span><span style="color:#F8F8F8"> c</span></div>
<div class="t" style="left:1608px;top:535.18px;font:400 25.645px/33px 'Liberation Mono', monospace;color:#F8F8F8;white-space:pre;letter-spacing:0.000px;"><span style="color:#F8F8F8">        </span><span style="color:#CDA869">return</span><span style="color:#F8F8F8"> </span><span style="color:#8F9D6A">&#x27;$&#x27;</span></div>
<div class="t" style="left:1653.4px;top:671.18px;font:italic 400 25.645px/33px 'Liberation Mono', monospace;color:#6b666c;white-space:pre;letter-spacing:0.000px;"># } Driver Code Ends</div>
<div style="left:1607.3px;top:675.3px;width:45.4px;height:21.8px;background:#d3b58f;border:2.400px solid #050505;border-radius:4px;"></div>
<svg style="left:1613px;top:679px" width="34" height="14" viewBox="0 0 34 14" fill="none" stroke="#ead6bb" stroke-width="2"><path d="M3.500 6.500h27M8.500 2L3 6.500 8.500 11M25.500 2L31 6.500 25.500 11"/><path d="M11.500 11.800h2M15.800 11.800h2M20.100 11.800h2" stroke="#f1e4d0" stroke-width="1.600"/></svg>
<div class="t" style="left:1558.4099999999999px;top:263.18px;font:400 25.645px/33px 'Liberation Mono', monospace;color:#E2E2E2;white-space:pre;letter-spacing:0.000px;">1</div>
<div class="t" style="left:1558.4099999999999px;top:297.18px;font:400 25.645px/33px 'Liberation Mono', monospace;color:#E2E2E2;white-space:pre;letter-spacing:0.000px;">2</div>
<div class="t" style="left:1558.4099999999999px;top:331.18px;font:400 25.645px/33px 'Liberation Mono', monospace;color:#E2E2E2;white-space:pre;letter-spacing:0.000px;">3</div>
<div class="t" style="left:1558.4099999999999px;top:365.18px;font:400 25.645px/33px 'Liberation Mono', monospace;color:#E2E2E2;white-space:pre;letter-spacing:0.000px;">4</div>
<div class="t" style="left:1558.4099999999999px;top:399.18px;font:400 25.645px/33px 'Liberation Mono', monospace;color:#E2E2E2;white-space:pre;letter-spacing:0.000px;">5</div>
<div class="t" style="left:1558.4099999999999px;top:433.18px;font:400 25.645px/33px 'Liberation Mono', monospace;color:#E2E2E2;white-space:pre;letter-spacing:0.000px;">6</div>
<div class="t" style="left:1558.4099999999999px;top:467.18px;font:400 25.645px/33px 'Liberation Mono', monospace;color:#E2E2E2;white-space:pre;letter-spacing:0.000px;">7</div>
<div class="t" style="left:1558.4099999999999px;top:501.18px;font:400 25.645px/33px 'Liberation Mono', monospace;color:#E2E2E2;white-space:pre;letter-spacing:0.000px;">8</div>
<div class="t" style="left:1558.4099999999999px;top:535.18px;font:400 25.645px/33px 'Liberation Mono', monospace;color:#E2E2E2;white-space:pre;letter-spacing:0.000px;">9</div>
<div class="t" style="left:1543.02px;top:569.18px;font:400 25.645px/33px 'Liberation Mono', monospace;color:#E2E2E2;white-space:pre;letter-spacing:0.000px;">10</div>
<div class="t" style="left:1543.02px;top:603.18px;font:400 25.645px/33px 'Liberation Mono', monospace;color:#E2E2E2;white-space:pre;letter-spacing:0.000px;">11</div>
<div class="t" style="left:1543.02px;top:637.18px;font:400 25.645px/33px 'Liberation Mono', monospace;color:#E2E2E2;white-space:pre;letter-spacing:0.000px;">12</div>
<div class="t" style="left:1543.02px;top:671.18px;font:400 25.645px/33px 'Liberation Mono', monospace;color:#E2E2E2;white-space:pre;letter-spacing:0.000px;">13</div>
<svg style="left:1582.200px;top:274.7px" width="9.500" height="5.500" viewBox="0 0 9.500 5.500"><path d="M0 0h9.500L4.750 5.500z" fill="#5a5a5a"/></svg>
<svg style="left:1582.200px;top:308.7px" width="9.500" height="5.500" viewBox="0 0 9.500 5.500"><path d="M0 0h9.500L4.750 5.500z" fill="#5a5a5a"/></svg>
<svg style="left:1582.200px;top:376.7px" width="9.500" height="5.500" viewBox="0 0 9.500 5.500"><path d="M0 0h9.500L4.750 5.500z" fill="#5a5a5a"/></svg>
<svg style="left:1582.200px;top:444.7px" width="9.500" height="5.500" viewBox="0 0 9.500 5.500"><path d="M0 0h9.500L4.750 5.500z" fill="#5a5a5a"/></svg>
<svg style="left:1582.200px;top:478.7px" width="9.500" height="5.500" viewBox="0 0 9.500 5.500"><path d="M0 0h9.500L4.750 5.500z" fill="#5a5a5a"/></svg>
<svg style="left:1584px;top:680.7px" width="6" height="11" viewBox="0 0 6 11"><path d="M0 0v11L6 5.500z" fill="#565656"/></svg>
<div style="left:1668.06px;top:329.2px;width:0px;height:238px;border-left:1.400px dotted #3b3b3b;"></div>
<div style="left:1729.62px;top:397.2px;width:0px;height:34px;border-left:1.400px dotted #3b3b3b;"></div>
<div style="left:1729.62px;top:465.2px;width:0px;height:68px;border-left:1.400px dotted #3b3b3b;"></div>
<div style="left:1791.18px;top:499.2px;width:0px;height:34px;border-left:1.400px dotted #3b3b3b;"></div>
<div style="left:1730.8px;top:329.2px;width:4.2px;height:34px;background:#515151;"></div>
<div style="left:2748.7px;top:480.8px;width:110px;height:104px;background:#2c2c2c;border:1.600px solid #454545;border-radius:15px 0 0 15px;"></div>
<svg style="left:2779px;top:512.500px" width="42" height="41" viewBox="0 0 42 41"><path d="M3 1h25a3 3 0 0 1 3 3v9H14a3 3 0 0 0-3 3v7.500H3a3 3 0 0 1-3-3V4a3 3 0 0 1 3-3z" fill="#35a855"/><path d="M15 12.500h24a3 3 0 0 1 3 3v16a3 3 0 0 1-3 3h-2v6l-7-6H15a3 3 0 0 1-3-3v-16a3 3 0 0 1 3-3z" fill="#2f9e4d" stroke="#2c2c2c" stroke-width="1.500"/></svg>
<div style="left:2852px;top:165px;width:11px;height:1460px;background:#6f6f6f;border-radius:6px 6px 0 0;"></div>
<div style="left:1582.4px;top:1538.2px;width:53.3px;height:53.6px;background:#fff;border:2px solid #555555;border-radius:13px;"></div>
<svg style="left:1586px;top:1541px" width="46" height="46" viewBox="1586 1541 46 46" fill="none" stroke="#2f4250" stroke-width="2.300" stroke-linecap="butt" stroke-linejoin="round"><path d="M1605.200 1572.800C1605.200 1569.800 1603.600 1568.600 1602.400 1567.100A8.200 8.200 0 1 1 1614 1567.100C1612.800 1568.600 1611.200 1569.800 1611.200 1572.800Z"/><path d="M1604.200 1576.900H1612.200M1605.800 1580.300H1610.800" stroke-width="2.600"/><path d="M1608.200 1544.200V1550M1590.300 1561.500H1596.600M1620.300 1561.500H1626.600M1595.500 1549.200L1599.700 1553.300M1620.900 1549.200L1616.700 1553.300M1599.700 1570.300L1595.800 1573.600M1616.700 1570.300L1620.800 1573.600"/></svg>
<div class="t" style="left:2190.8px;top:1547.51px;font:700 24.5px/32px 'Liberation Sans', sans-serif;color:#777777;white-space:pre;letter-spacing:-0.702px;text-decoration:underline;text-decoration-thickness:2px;text-underline-offset:4px;">Custom Input</div>
<div style="left:2371.9px;top:1535px;width:220.7px;height:59.3px;background:#465c69;border:1.600px solid #5d6c75;border-radius:13px;"></div>
<div class="t" style="left:2406.3px;top:1549.60px;font:700 22.8px/30px 'Liberation Sans', sans-serif;color:#ffffff;white-space:pre;letter-spacing:-0.958px;">Compile &amp; Run</div>
<div style="left:2623.3px;top:1535px;width:143.5px;height:59.3px;background:#2f8d46;border:1.600px solid #4a8a5a;border-radius:13px;"></div>
<div class="t" style="left:2658.3px;top:1549.60px;font:700 22.8px/30px 'Liberation Sans', sans-serif;color:#ffffff;white-space:pre;letter-spacing:-0.666px;">Submit</div>
<div style="left:0px;top:1610.3px;width:2863px;height:9px;background:linear-gradient(#3e3e3e 0,#3a3a3a 22%,#242424 45%,#1f1f1f 100%);"></div>
<div style="left:1468.5px;top:835.5px;width:60px;height:60px;background:#fff;border-radius:50%;box-shadow:0 0 3px rgba(0,0,0,.5);"></div>
<svg style="left:1480px;top:848px" width="37" height="35" viewBox="0 0 37 35" fill="none" stroke="#4d5c68" stroke-width="2.600" stroke-linejoin="round"><path d="M18.500 1v33"/><path d="M12.500 11.500v12L2.500 17.500zM24.500 11.500v12l10-6z"/></svg>
</body></html>
